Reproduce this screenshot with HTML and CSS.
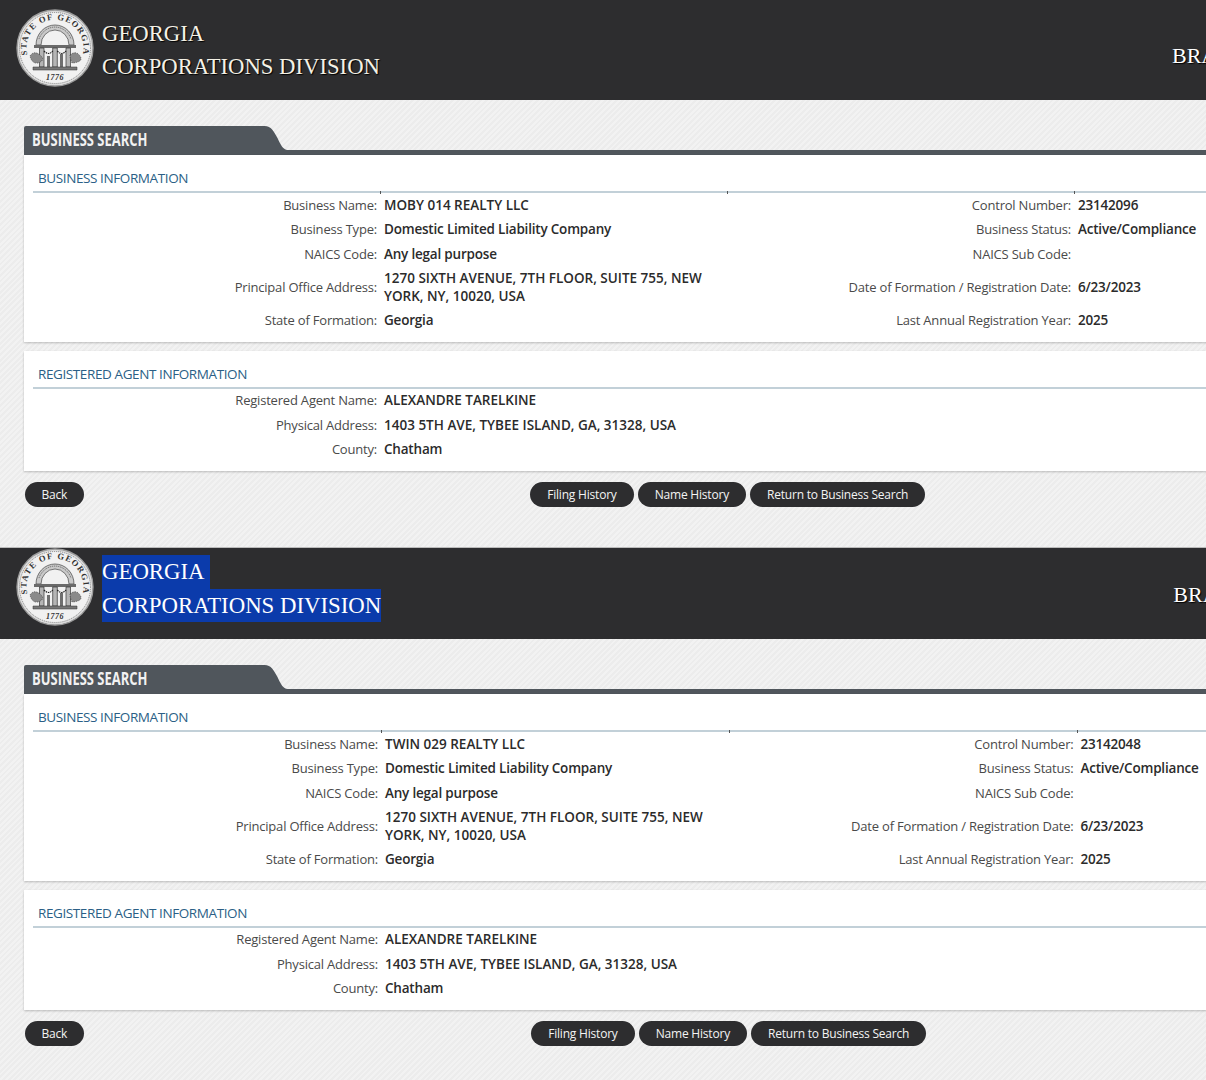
FILE: index.html

```html
<!DOCTYPE html>
<html>
  <head>
    <meta charset="utf-8" />
    <meta name="viewport" content="width=device-width, initial-scale=1" />
    <title>Georgia Corporations Division</title>
    <link rel="stylesheet" href="styles.css">
  </head>

  <body>
    <svg class="sprite" width="0" height="0" aria-hidden="true">
      <symbol id="seal" viewBox="0 0 78 78">
        <circle cx="39" cy="39" r="38" fill="#dcdcdc" stroke="#9c9c9c" stroke-width="1.4"/>
        <circle cx="39" cy="39" r="35.5" fill="#f1f1f1" stroke="#666" stroke-width=".7" stroke-dasharray="1 1"/>
        <path id="sealArc" d="M15 54.500A28.500 28.500 0 1 1 63 54.500" fill="none"/>
        <text class="seal-text"><textPath href="#sealArc" startOffset="50%" text-anchor="middle">STATE OF GEORGIA</textPath></text>
        <text class="seal-year" x="39" y="71" text-anchor="middle">1776</text>
        <path d="M20 36A19 20 0 0 1 58 36H53A14 15 0 0 0 25 36Z" fill="#c9c9c9" stroke="#444" stroke-width=".7"/>
        <path d="M23 30A17 18 0 0 1 55 30" fill="none" stroke="#555" stroke-width=".8" stroke-dasharray="1.200 .8"/>
        <path d="M18 36H60V39H18Z" fill="#6a6a6a"/>
        <path d="M23.500 39H28V58H23.500ZM36.700 39H41.300V58H36.700ZM50 39H54.500V58H50Z" fill="#b5b5b5" stroke="#333" stroke-width=".7"/>
        <path d="M28 42Q32.500 47 36.700 42M41.300 42Q45.500 47 50 42" fill="none" stroke="#222" stroke-width="1.200" stroke-dasharray="1.500 .8"/>
        <path d="M14 47Q18 41 24 46T22 54Q16 55 14 47ZM54 46Q60 41 64 47T56 54Q54 50 54 46Z" fill="#8a8a8a" stroke="#333" stroke-width=".6" stroke-dasharray="1.500 1"/>
        <path d="M31 47H34V58H31ZM44 45H47V58H44Z" fill="#6f6f6f"/>
        <path d="M17 58H61V61H17Z" fill="#777" stroke="#333" stroke-width=".5"/>
      </symbol>
    </svg>

    <div class="site">
      <header class="masthead">
        <svg class="seal" width="78" height="78"><use href="#seal"/></svg>
        <h1 class="brand"><span>GEORGIA</span><span>CORPORATIONS DIVISION</span></h1>
        <div class="official">BRAD RAFFENSPERGER</div>
      </header>
      <main class="content">
        <div class="tab-bar"><h2 class="tab"><span>BUSINESS SEARCH</span></h2></div>
        <section class="card">
          <h3 class="card-title">BUSINESS INFORMATION</h3>
          <div class="info">
            <div class="label">Business Name:</div><div class="value caps tick">MOBY 014 REALTY LLC</div>
            <div class="label tick">Control Number:</div><div class="value tick">23142096</div>
            <div class="label">Business Type:</div><div class="value">Domestic Limited Liability Company</div>
            <div class="label">Business Status:</div><div class="value">Active/Compliance</div>
            <div class="label">NAICS Code:</div><div class="value">Any legal purpose</div>
            <div class="label">NAICS Sub Code:</div><div class="value"></div>
            <div class="label">Principal Office Address:</div><div class="value caps">1270 SIXTH AVENUE, 7TH FLOOR, SUITE 755, NEW YORK, NY, 10020, USA</div>
            <div class="label">Date of Formation / Registration Date:</div><div class="value">6/23/2023</div>
            <div class="label">State of Formation:</div><div class="value">Georgia</div>
            <div class="label">Last Annual Registration Year:</div><div class="value">2025</div>
          </div>
        </section>
        <section class="card">
          <h3 class="card-title">REGISTERED AGENT INFORMATION</h3>
          <div class="info">
            <div class="label">Registered Agent Name:</div><div class="value caps wide">ALEXANDRE TARELKINE</div>
            <div class="label">Physical Address:</div><div class="value caps wide">1403 5TH AVE, TYBEE ISLAND, GA, 31328, USA</div>
            <div class="label">County:</div><div class="value wide">Chatham</div>
          </div>
        </section>
        <div class="actions">
          <button class="btn">Back</button>
          <div class="actions-mid">
            <button class="btn">Filing History</button>
            <button class="btn">Name History</button>
            <button class="btn">Return to Business Search</button>
          </div>
        </div>
      </main>
    </div>

    <div class="site site-second">
      <header class="masthead">
        <svg class="seal" width="78" height="78"><use href="#seal"/></svg>
        <h1 class="brand"><span>GEORGIA&nbsp;</span><span>CORPORATIONS DIVISION</span></h1>
        <div class="official">BRAD RAFFENSPERGER</div>
      </header>
      <main class="content">
        <div class="tab-bar"><h2 class="tab"><span>BUSINESS SEARCH</span></h2></div>
        <section class="card">
          <h3 class="card-title">BUSINESS INFORMATION</h3>
          <div class="info">
            <div class="label">Business Name:</div><div class="value caps tick">TWIN 029 REALTY LLC</div>
            <div class="label tick">Control Number:</div><div class="value tick">23142048</div>
            <div class="label">Business Type:</div><div class="value">Domestic Limited Liability Company</div>
            <div class="label">Business Status:</div><div class="value">Active/Compliance</div>
            <div class="label">NAICS Code:</div><div class="value">Any legal purpose</div>
            <div class="label">NAICS Sub Code:</div><div class="value"></div>
            <div class="label">Principal Office Address:</div><div class="value caps">1270 SIXTH AVENUE, 7TH FLOOR, SUITE 755, NEW YORK, NY, 10020, USA</div>
            <div class="label">Date of Formation / Registration Date:</div><div class="value">6/23/2023</div>
            <div class="label">State of Formation:</div><div class="value">Georgia</div>
            <div class="label">Last Annual Registration Year:</div><div class="value">2025</div>
          </div>
        </section>
        <section class="card">
          <h3 class="card-title">REGISTERED AGENT INFORMATION</h3>
          <div class="info">
            <div class="label">Registered Agent Name:</div><div class="value caps wide">ALEXANDRE TARELKINE</div>
            <div class="label">Physical Address:</div><div class="value caps wide">1403 5TH AVE, TYBEE ISLAND, GA, 31328, USA</div>
            <div class="label">County:</div><div class="value wide">Chatham</div>
          </div>
        </section>
        <div class="actions">
          <button class="btn">Back</button>
          <div class="actions-mid">
            <button class="btn">Filing History</button>
            <button class="btn">Name History</button>
            <button class="btn">Return to Business Search</button>
          </div>
        </div>
      </main>
    </div>
  </body>
</html>
```

FILE: styles.css

```css
html,
body {
  margin: 0;
  height: 1080px;
  overflow: hidden;
}
body {
  font-family: "Open Sans", Arial, sans-serif;
  font-size: 13px;
  color: #444;
  background: #f0f0f0;
}
.sprite {
  position: absolute;
}
.seal-text {
  font: bold 8.500px "Liberation Serif", serif;
  letter-spacing: 1.2px;
  fill: #333;
}
.seal-year {
  font: italic bold 8px "Liberation Serif", serif;
  letter-spacing: .5px;
  fill: #333;
}

.site {
  --col-a: 347px;
  --col-b: 347px;
  --col-c: 347px;
  --back-left: 1px;
  --mid-gap: 446px;
  overflow: hidden;
  height: 547px;
  box-sizing: border-box;
  background: repeating-linear-gradient(135deg, #f2f2f2 0, #f2f2f2 2px, #ececec 2px, #ececec 4px);
}
.site-second {
  --col-a: 348px;
  --col-b: 348px;
  --col-c: 347.500px;
  --mid-gap: 447px;
  height: 533px;
}

/* header */
.masthead {
  display: flex;
  align-items: flex-start;
  height: 100px;
  box-sizing: border-box;
  padding: 9px 0 0 16px;
  background: #2d2d2f;
  white-space: nowrap;
}
.site-second .masthead {
  height: 92px;
  padding-top: 0;
  border-top: 1px solid #bbb;
}
.seal {
  flex: none;
}
.brand {
  margin: 8px 0 0 8px;
  font: normal 22.700px/33px "Liberation Serif", serif;
  color: #f4f1e6;
  text-shadow: 1px 1px 1px #000;
}
.brand span {
  display: block;
  width: fit-content;
}
.site-second .brand {
  margin-top: 7px;
  font-size: 22.800px;
  line-height: 33.500px;
  color: #fff;
  text-shadow: none;
}
.site-second .brand span {
  background: #0b3bab;
}
.official {
  flex: none;
  margin: 30px 0 0 792px;
  font: 22px/33px "Liberation Serif", serif;
  color: #fff;
  text-shadow: 1px 1px 1px #000;
}

/* main */
.content {
  margin: 26px -40px 0 23.500px;
}
.tab-bar {
  display: flex;
  height: 29px;
  border-bottom: 5px solid #50565c;
  box-sizing: border-box;
}
.tab {
  position: relative;
  width: 240px;
  height: 24px;
  margin: 0;
  background: #50565c;
  border-radius: 2px 0 0 0;
  color: #f2f2f2;
  font-size: 18px;
  line-height: 27px;
  font-weight: 700;
  white-space: nowrap;
}
.tab span {
  display: inline-block;
  padding-left: 8px;
  transform: scaleX(.72);
  transform-origin: 8px 0;
}
.tab::after {
  content: "";
  position: absolute;
  left: 238px;
  top: 0;
  width: 26px;
  height: 24px;
  background: #50565c;
  clip-path: path("M0 0H3C10 0 12 5 16 12C19 19 22 24 26 24H0Z");
}
.card {
  background: #fff;
  box-shadow: 0 1px 2px rgba(0, 0, 0, .22);
  margin-bottom: 9px;
  padding: 14px 0 8.500px 9.500px;
}
.card-title {
  margin: 0;
  padding: 0 0 3px 5px;
  border-bottom: 2px solid #c2d0d8;
  color: #2b5f86;
  font-size: 13.500px;
  font-weight: 400;
  letter-spacing: -.4px;
  line-height: 19px;
}
.info {
  display: grid;
  grid-template-columns: var(--col-a) var(--col-b) var(--col-c) 1fr;
}
.label,
.value {
  position: relative;
  display: flex;
  align-items: center;
  padding: 3.500px 3px;
  line-height: 17.500px;
}
.label {
  justify-content: flex-end;
  text-align: right;
  color: #4a4a4a;
  letter-spacing: -.2px;
}
.value {
  padding-left: 4px;
  color: #2b2b2b;
  font-size: 13.500px;
  font-weight: 600;
  letter-spacing: -.2px;
}
.value.caps {
  letter-spacing: 0;
}
.value.wide {
  grid-column: span 3;
}
.tick::before {
  content: "";
  position: absolute;
  left: 0;
  top: -2px;
  width: 1px;
  height: 3px;
  background: #555;
}

/* buttons */
.actions {
  display: flex;
  align-items: flex-start;
  padding: 2px 0 0 var(--back-left);
}
.actions-mid {
  display: flex;
  gap: 4px;
  margin-left: var(--mid-gap);
}
.btn {
  height: 25px;
  padding: 0 17px;
  border: 0;
  border-radius: 13px;
  background: #2d2d2f;
  color: #f4f4f4;
  font-family: inherit;
  font-size: 12px;
  letter-spacing: -.2px;
  line-height: 25px;
}
```
